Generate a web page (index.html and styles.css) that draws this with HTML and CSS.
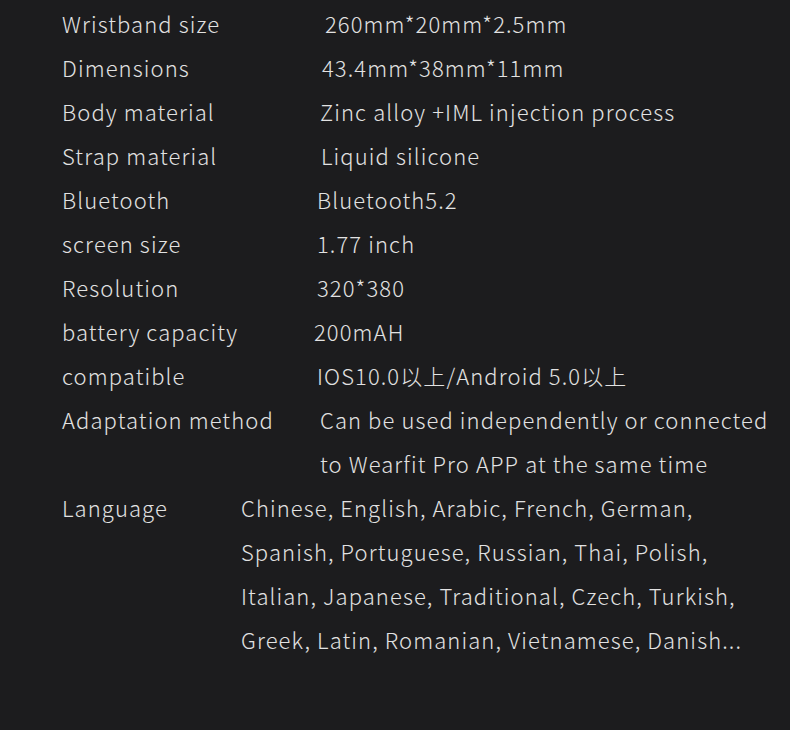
FILE: index.html
```html
<!DOCTYPE html>
<html>
<head>
<meta charset="utf-8">
<link rel="stylesheet" href="styles.css">
</head>
<body>
<div class="specs">
  <div class="row"><div class="label">Wristband size</div><div class="value p11">260mm*20mm*2.5mm</div></div>
  <div class="row"><div class="label">Dimensions</div><div class="value p8">43.4mm*38mm*11mm</div></div>
  <div class="row"><div class="label">Body material</div><div class="value p6">Zinc alloy +IML injection process</div></div>
  <div class="row"><div class="label">Strap material</div><div class="value p7">Liquid silicone</div></div>
  <div class="row"><div class="label">Bluetooth</div><div class="value p3">Bluetooth5.2</div></div>
  <div class="row"><div class="label">screen size</div><div class="value p3">1.77 inch</div></div>
  <div class="row"><div class="label">Resolution</div><div class="value p3">320*380</div></div>
  <div class="row"><div class="label">battery capacity</div><div class="value">200mAH</div></div>
  <div class="row"><div class="label">compatible</div><div class="value p3">IOS10.0以上/Android 5.0以上</div></div>
  <div class="row"><div class="label">Adaptation method</div><div class="value p6">Can be used independently or connected<br>to Wearfit Pro APP at the same time</div></div>
  <div class="row wide"><div class="label">Language</div><div class="value">Chinese, English, Arabic, French, German,<br>Spanish, Portuguese, Russian, Thai, Polish,<br>Italian, Japanese, Traditional, Czech, Turkish,<br>Greek, Latin, Romanian, Vietnamese, Danish...</div></div>
</div>
</body>
</html>
```
FILE: styles.css
```css
html, body {
  margin: 0;
  padding: 0;
  background: #1c1c1e;
}
body {
  width: 790px;
  height: 730px;
  overflow: hidden;
  font-family: "Noto Sans CJK SC", "Noto Sans", sans-serif;
  font-size: 22px;
  font-weight: 300;
  letter-spacing: 1.1px;
  line-height: 44px;
  color: #e2e2e2;
}
.specs {
  padding: 1px 0 0 62px;
  display: flex;
  flex-direction: column;
}
.row {
  display: grid;
  grid-template-columns: 252px 1fr;
}
.row.wide {
  grid-template-columns: 179px 1fr;
}
.value { white-space: nowrap; }
.p3 { padding-left: 3px; }
.p6 { padding-left: 6px; }
.p7 { padding-left: 7px; }
.p8 { padding-left: 8px; }
.p11 { padding-left: 11px; }
```
